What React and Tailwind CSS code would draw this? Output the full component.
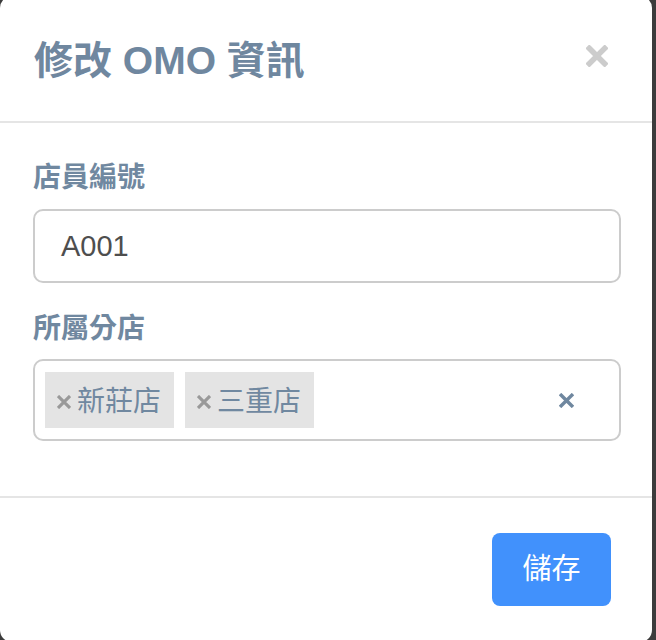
const font = { fontFamily: '"Liberation Sans", "Noto Sans CJK TC", sans-serif' };

const Cross = ({ size, stroke, color }) => (
  <svg width={size} height={size} viewBox="0 0 20 20" className="shrink-0">
    <path d="M3 3 L17 17 M17 3 L3 17" stroke={color} strokeWidth={stroke} strokeLinecap="square" />
  </svg>
);

const Tag = ({ label }) => (
  <div className="flex h-[56px] items-center bg-[#e4e4e4] pl-[12px] pr-[13px] pt-[3px]">
    <span className="mr-[6px]">
      <Cross size={14} stroke={4.5} color="#999999" />
    </span>
    <span className="text-[28px] leading-none text-[#7088a0]">{label}</span>
  </div>
);

export default function App() {
  return (
    <div className="h-[640px] w-[656px] overflow-hidden bg-[#3c3c3c]" style={font}>
      <div className="mt-[-4px] h-[646px] w-[652px] rounded-[12px] bg-white">
        <div className="flex h-[127px] items-center justify-between border-b-2 border-[#e5e5e5] pl-[34px] pr-[44px] pt-[4px]">
          <h4 className="text-[39px] font-bold leading-none text-[#6f879f]">修改 OMO 資訊</h4>
          <span className="mb-[10px]">
            <Cross size={22} stroke={5} color="#cccccc" />
          </span>
        </div>

        <div className="pl-[33px] pr-[31px] pt-[35px] pb-[55px]">
          <label className="block h-[40px] text-[28px] font-bold leading-[40px] text-[#7088a0]">店員編號</label>
          <div className="mt-[11px] flex h-[74px] items-center rounded-[10px] border-2 border-[#cccccc] px-[26px]">
            <span className="text-[29px] leading-none text-[#4e4e4e]">A001</span>
          </div>

          <label className="mt-[26px] block h-[40px] text-[28px] font-bold leading-[40px] text-[#7088a0]">所屬分店</label>
          <div className="mt-[10px] flex h-[82px] items-center rounded-[10px] border-2 border-[#cccccc] pl-[10px] pr-[45px]">
            <div className="flex flex-1 gap-[11px]">
              <Tag label="新莊店" />
              <Tag label="三重店" />
            </div>
            <Cross size={15} stroke={4.5} color="#6f879f" />
          </div>
        </div>

        <div className="flex justify-end border-t-2 border-[#e5e5e5] pr-[41px] pt-[35px]">
          <button className="h-[73px] w-[119px] rounded-[8px] bg-[#4191fc] text-[29px] leading-none text-white">儲存</button>
        </div>
      </div>
    </div>
  );
}
